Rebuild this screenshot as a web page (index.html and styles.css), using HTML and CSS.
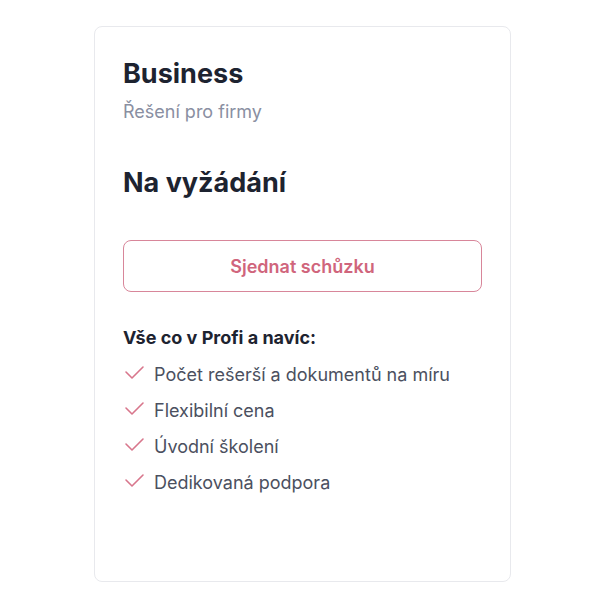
FILE: index.html
```html
<!DOCTYPE html>
<html lang="cs">
<head>
  <meta charset="UTF-8">
  <title>Business</title>
  <link rel="stylesheet" href="styles.css">
</head>
<body>

<div class="card">
  <h2 class="plan-name">Business</h2>
  <p class="plan-desc">Řešení pro firmy</p>
  <div class="price">Na vyžádání</div>
  <a href="#" class="btn">Sjednat schůzku</a>

  <p class="features-title">Vše co v Profi a navíc:</p>
  <ul class="features">
    <li>
      <svg class="check" viewBox="0 0 22 16" width="22" height="16"><path d="M3 7l6 6 11-11" /></svg>
      Počet rešerší a dokumentů na míru
    </li>
    <li>
      <svg class="check" viewBox="0 0 22 16" width="22" height="16"><path d="M3 7l6 6 11-11" /></svg>
      Flexibilní cena
    </li>
    <li>
      <svg class="check" viewBox="0 0 22 16" width="22" height="16"><path d="M3 7l6 6 11-11" /></svg>
      Úvodní školení
    </li>
    <li>
      <svg class="check" viewBox="0 0 22 16" width="22" height="16"><path d="M3 7l6 6 11-11" /></svg>
      Dedikovaná podpora
    </li>
  </ul>
</div>

</body>
</html>
```
FILE: styles.css
```css
body {
  font-family: Inter, "Noto Sans", sans-serif;
  margin: 0;
  padding: 26px 0 0 94px;
  background-color: #fff;
}

.card {
  box-sizing: border-box;
  width: 417px;
  height: 556px;
  padding: 31px 28px;
  border: 1px solid #e8e9ed;
  border-radius: 8px;
  background-color: #fff;
}

.plan-name {
  margin: 0;
  font-size: 27px;
  line-height: 32px;
  font-weight: 700;
  color: #1d2330;
}

.plan-desc {
  margin: 9px 0 0;
  font-size: 18px;
  line-height: 26px;
  color: #8a8fa2;
}

.price {
  margin-top: 42px;
  font-size: 27px;
  line-height: 32px;
  font-weight: 700;
  color: #1d2330;
}

.btn {
  display: flex;
  justify-content: center;
  align-items: center;
  height: 52px;
  box-sizing: border-box;
  margin-top: 41px;
  border: 1px solid #d8869a;
  border-radius: 8px;
  color: #d0657c;
  font-size: 18px;
  font-weight: 600;
  text-decoration: none;
}

.features-title {
  margin: 33px 0 0;
  font-size: 18px;
  line-height: 26px;
  font-weight: 700;
  color: #1d2330;
}

.features {
  list-style: none;
  margin: 5px 0 0;
  padding: 0;
}

.features li {
  display: flex;
  align-items: center;
  gap: 9px;
  height: 36px;
  font-size: 18px;
  color: #4b5060;
}

.check {
  flex-shrink: 0;
  margin-top: -3px;
  fill: none;
  stroke: #d8768c;
  stroke-width: 1.6;
  stroke-linecap: round;
  stroke-linejoin: round;
}
```
